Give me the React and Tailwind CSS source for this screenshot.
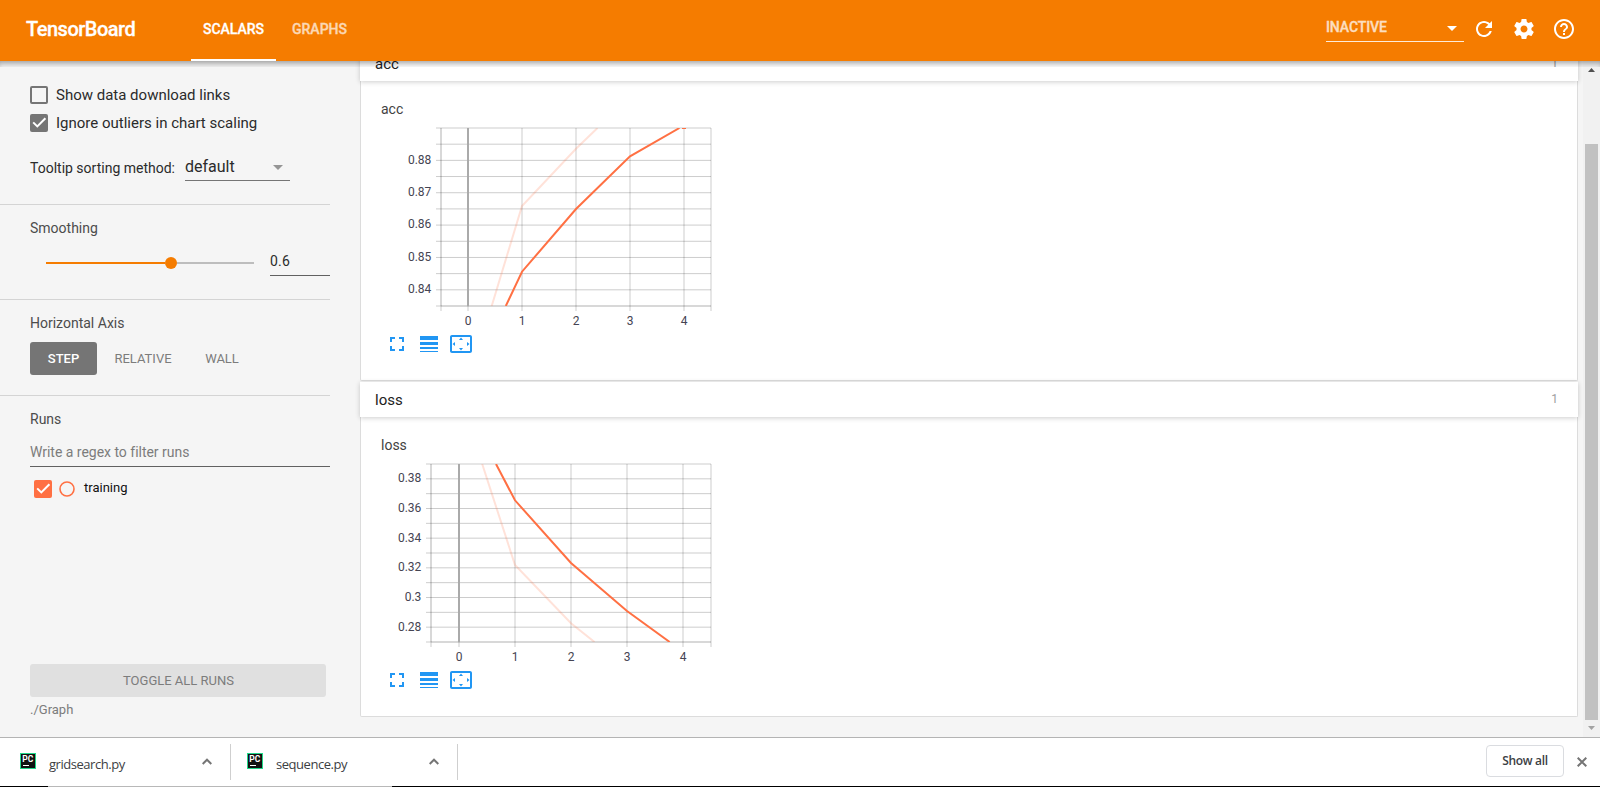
import React from "react";

function MdIcon({ d, className }) {
  return (
    <svg viewBox="0 0 24 24" className={`h-6 w-6 shrink-0 fill-current ${className || ""}`}>
      <path d={d} />
    </svg>
  );
}

const ICONS = {
  refresh:
    "M17.65 6.35C16.2 4.9 14.21 4 12 4c-4.42 0-7.99 3.58-7.99 8s3.57 8 7.99 8c3.73 0 6.84-2.55 7.73-6h-2.08c-.82 2.33-3.04 4-5.65 4-3.31 0-6-2.69-6-6s2.69-6 6-6c1.66 0 3.14.69 4.22 1.78L13 11h7V4l-2.35 2.35z",
  settings:
    "M19.43 12.98c.04-.32.07-.64.07-.98s-.03-.66-.07-.98l2.11-1.65c.19-.15.24-.42.12-.64l-2-3.46c-.12-.22-.39-.3-.61-.22l-2.49 1c-.52-.4-1.08-.73-1.69-.98l-.38-2.65C14.46 2.18 14.25 2 14 2h-4c-.25 0-.46.18-.49.42l-.38 2.65c-.61.25-1.17.59-1.69.98l-2.49-1c-.23-.09-.49 0-.61.22l-2 3.46c-.13.22-.07.49.12.64l2.11 1.65c-.04.32-.07.65-.07.98s.03.66.07.98l-2.11 1.65c-.19.15-.24.42-.12.64l2 3.46c.12.22.39.3.61.22l2.49-1c.52.4 1.08.73 1.69.98l.38 2.65c.03.24.24.42.49.42h4c.25 0 .46-.18.49-.42l.38-2.65c.61-.25 1.17-.59 1.69-.98l2.49 1c.23.09.49 0 .61-.22l2-3.46c.12-.22.07-.49-.12-.64l-2.11-1.65zM12 15.5c-1.93 0-3.5-1.57-3.5-3.5s1.57-3.5 3.5-3.5 3.5 1.57 3.5 3.5-1.57 3.5-3.5 3.5z",
  help:
    "M11 18h2v-2h-2v2zm1-16C6.48 2 2 6.48 2 12s4.48 10 10 10 10-4.48 10-10S17.52 2 12 2zm0 18c-4.41 0-8-3.59-8-8s3.59-8 8-8 8 3.59 8 8-3.59 8-8 8zm0-14c-2.21 0-4 1.79-4 4h2c0-1.1.9-2 2-2s2 .9 2 2c0 2-3 1.75-3 5h2c0-2.25 3-2.5 3-5 0-2.21-1.79-4-4-4z",
  dropDown: "M7 10l5 5 5-5z",
  fullscreen:
    "M7 14H5v5h5v-2H7v-3zm-2-4h2V7h3V5H5v5zm12 7h-3v2h5v-5h-2v3zM14 5v2h3v3h2V5h-5z",
  lineWeight: "M3 17h18v-2H3v2zm0 3h18v-1H3v1zm0-7h18v-3H3v3zm0-9v4h18V4H3z",
  overscan:
    "M12.01 5.5L10 8h4l-1.99-2.5zM18 10v4l2.5-1.99L18 10zM6 10l-2.5 2.01L6 14v-4zm8 6h-4l2.01 2.5L14 16zm7-13H3c-1.1 0-2 .9-2 2v14c0 1.1.9 2 2 2h18c1.1 0 2-.9 2-2V5c0-1.1-.9-2-2-2zm0 16.01H3V4.99h18v14.02z",
};

function Header() {
  return (
    <header className="flex h-[61px] shrink-0 bg-[#f57c00] text-white">
      <div className="w-[191px] pl-[26px] text-[20px] leading-[58px] font-medium tracking-[-0.5px] [-webkit-text-stroke:0.3px_#fff]">
        TensorBoard
      </div>
      <nav className="flex text-[14px] leading-[58px] font-medium [-webkit-text-stroke:0.3px_#fff]">
        <div className="w-[85px] border-b-2 border-white text-center">SCALARS</div>
        <div className="w-[87px] text-center opacity-70">GRAPHS</div>
      </nav>
      <div className="ml-auto flex pr-6">
        <div className="mr-2 flex h-[42px] w-[138px] items-center justify-between border-b border-white/85 pt-[14px]">
          <span className="pb-px text-[14px] font-medium tracking-[-0.1px] opacity-75 [-webkit-text-stroke:0.3px_#fff]">INACTIVE</span>
          <MdIcon d={ICONS.dropDown} />
        </div>
        <div className="flex gap-4 pt-[17px]">
          <MdIcon d={ICONS.refresh} />
          <MdIcon d={ICONS.settings} />
          <MdIcon d={ICONS.help} />
        </div>
      </div>
    </header>
  );
}

function CheckMark() {
  return (
    <svg viewBox="0 0 18 18" className="h-[18px] w-[18px]" fill="none" stroke="#fff" strokeWidth="2">
      <path d="M3.2 8.4 L7.3 12.4 L15.4 4.2" />
    </svg>
  );
}

function Sidebar() {
  return (
    <aside className="flex w-[330px] shrink-0 flex-col text-[14px] text-[#4c4c4c]">
      <section className="h-[144px] border-b border-[#d4d4d4] pt-[25px] pl-[30px] text-[#2b2b2b]">
        <div className="flex h-[18px] items-center gap-2 text-[15px]">
          <span className="h-[18px] w-[18px] rounded-[2px] border-2 border-[#757575]" />
          Show data download links
        </div>
        <div className="mt-[10px] flex h-[18px] items-center gap-2 text-[15px]">
          <span className="h-[18px] w-[18px] rounded-[2px] bg-[#757575]">
            <CheckMark />
          </span>
          Ignore outliers in chart scaling
        </div>
        <div className="mt-6 flex h-[25px]">
          <span className="w-[155px] leading-6">Tooltip sorting method:</span>
          <span className="flex w-[105px] items-center justify-between border-b border-[#757575] pb-[3px] text-[16px] leading-[20px]">
            default
            <MdIcon d={ICONS.dropDown} className="text-[#959595]" />
          </span>
        </div>
      </section>
      <section className="h-[95px] border-b border-[#d4d4d4] pl-[30px]">
        <div className="pt-[13px] leading-5">Smoothing</div>
        <div className="mt-[11px] flex h-[28px] items-center pl-4">
          <div className="flex h-3 w-[208px] items-center">
            <div className="h-[2px] w-[119px] bg-[#f57c00]" />
            <div className="h-3 w-3 rounded-full bg-[#f57c00]" />
            <div className="h-[2px] flex-1 bg-[#bdbdbd]" />
          </div>
          <div className="mb-px ml-4 h-[27px] w-[60px] border-b border-[#616161] text-[14px] leading-[24px] tracking-[0.2px] text-[#2b2b2b]">0.6</div>
        </div>
      </section>
      <section className="h-[96px] border-b border-[#d4d4d4] pl-[30px]">
        <div className="pt-[13px] leading-5">Horizontal Axis</div>
        <div className="mt-[9px] flex h-[33px] text-[13px] leading-[33px] text-[#7c7c7c]">
          <div className="w-[67px] rounded-[3px] bg-[#757575] text-center font-medium text-white">STEP</div>
          <div className="w-[92px] text-center">RELATIVE</div>
          <div className="w-[66px] text-center">WALL</div>
        </div>
      </section>
      <section className="pl-[30px]">
        <div className="pt-[13px] leading-5">Runs</div>
        <div className="mt-3 h-[26px] border-b border-[#616161] text-[14px] leading-[22px] tracking-[-0.02px] text-[#7c7c7c]">
          Write a regex to filter runs
        </div>
        <div className="mt-[13px] flex h-[18px] items-center pl-1">
          <span className="h-[18px] w-[18px] rounded-[2px] bg-[#ff7043]">
            <CheckMark />
          </span>
          <svg viewBox="0 0 16 16" className="ml-[7px] h-4 w-4" fill="none" stroke="#ff7043" strokeWidth="1.6">
            <circle cx="8" cy="8" r="7" />
          </svg>
          <span className="ml-[9px] pb-[2px] text-[13px] text-[#111]">training</span>
        </div>
      </section>
      <section className="mt-auto h-[73px] pl-[30px] text-[13px] text-[#7c7c7c]">
        <div className="h-[33px] w-[296px] rounded-[3px] bg-[#e0e0e0] pl-px text-center leading-[33px]">TOGGLE ALL RUNS</div>
        <div className="pt-[3px] leading-5">./Graph</div>
      </section>
    </aside>
  );
}

/* Plot coordinates are relative to the top-left corner of the 350x206 chart box. */
const ACC = {
  tag: "acc",
  left: 60,
  ticks: [87, 141, 195, 249, 303],
  rows: 11,
  firstLabel: 2,
  labels: ["0.88", "0.87", "0.86", "0.85", "0.84"],
  raw: "110.7,178 141,78 195,20.7 216.5,0",
  smooth: "124.8,178 141,143.7 195,81 249,28.3 298.5,0",
  end: true,
};

const LOSS = {
  tag: "loss",
  left: 50,
  ticks: [78, 134, 190, 246, 302],
  rows: 12,
  firstLabel: 1,
  labels: ["0.38", "0.36", "0.34", "0.32", "0.3", "0.28"],
  raw: "101.2,0 134,101 190,159.3 213.5,178",
  smooth: "115,0 134,36.3 190,99 246,147 288.7,178",
};

function Chart({ c }) {
  const step = 178 / c.rows;
  const rows = Array.from({ length: c.rows + 1 }, (_, i) => i * step);
  const clip = `plot-${c.tag}`;
  return (
    <svg viewBox="0 -2 350 206" className="block h-[206px] w-[350px]">
      <clipPath id={clip}>
        <rect x={c.left} y="0" width={330 - c.left} height="178" />
      </clipPath>
      <g stroke="#000" strokeOpacity="0.2">
        {rows.map((y) => (
          <line key={y} x1={c.left - 5} x2="330" y1={y} y2={y} />
        ))}
        {[c.left, ...c.ticks, 330].map((x) => (
          <line key={x} x1={x} x2={x} y1="0" y2="183" />
        ))}
        <line x1={c.left} x2={c.left} y1="0" y2="178" strokeOpacity="0.12" />
        <line x1={c.left} x2="330" y1="178" y2="178" strokeOpacity="0.12" />
      </g>
      <line x1={c.ticks[0]} x2={c.ticks[0]} y1="0" y2="178" stroke="#aaa" strokeWidth="2" />
      <g clipPath={`url(#${clip})`} fill="none" stroke="#ff7043" strokeWidth="2">
        <polyline points={c.raw} strokeOpacity="0.2" />
        <polyline points={c.smooth} />
        {c.end && <line x1="301" x2="305" y1="0" y2="0" />}
      </g>
      <g className="fill-[#454452] text-[12px]">
        {c.labels.map((t, i) => (
          <text key={t} x={c.left - 9.7} y={Math.round((c.firstLabel + 2 * i) * step + 3.4)} textAnchor="end">
            {t}
          </text>
        ))}
        {c.ticks.map((x, i) => (
          <text key={x} x={x} y="197" textAnchor="middle">
            {i}
          </text>
        ))}
      </g>
    </svg>
  );
}

function Category({ c }) {
  return (
    <section className="mb-px">
      <div className="relative flex h-[35px] items-center justify-between bg-white pt-[2px] pr-5 pl-[15px] text-[15px] text-[#212121] shadow-[0_1px_5px_rgba(0,0,0,0.2)]">
        <span>{c.tag}</span>
        <span className="pb-[3px] text-[12px] text-[#9e9e9e]">1</span>
      </div>
      <div className="h-[300px] rounded-b-[2px] border border-t-0 border-[#dcdcdc] bg-white pl-5">
        <div className="pt-[18px] text-[14px] leading-5 text-[#424242]">{c.tag}</div>
        <div className="mt-[7px]">
          <Chart c={c} />
        </div>
        <div className="flex gap-2 pl-1 text-[#2196f3]">
          <MdIcon d={ICONS.fullscreen} />
          <MdIcon d={ICONS.lineWeight} />
          <MdIcon d={ICONS.overscan} />
        </div>
      </div>
    </section>
  );
}

function Scrollbar() {
  return (
    <div className="flex w-[17px] shrink-0 flex-col items-center bg-[#f1f1f1]">
      <svg viewBox="0 0 17 17" className="mt-px h-[17px] w-[17px] fill-[#505050]">
        <path d="M5 10h7L8.5 6z" />
      </svg>
      <div className="mt-[65px] h-[576px] w-[13px] bg-[#c1c1c1]" />
      <svg viewBox="0 0 17 17" className="h-[17px] w-[17px] fill-[#a3a3a3]">
        <path d="M5 6h7L8.5 10z" />
      </svg>
    </div>
  );
}

function Download({ name, className }) {
  return (
    <div className={`flex h-9 items-center border-r border-[#cfcfcf] pr-[18px] ${className}`}>
      <svg viewBox="0 0 16 16" className="mb-[3px] h-4 w-4">
        <rect width="16" height="16" fill="#21d789" />
        <rect x="1" y="1" width="14" height="14" fill="#111" />
        <text x="2.2" y="8.8" fill="#fff" fontSize="8.5" fontWeight="700" textLength="11" lengthAdjust="spacingAndGlyphs">
          PC
        </text>
        <rect x="3" y="12" width="6" height="1" fill="#fff" />
      </svg>
      <span className="ml-[13px] pt-[5px] font-['Open_Sans',sans-serif] text-[13px] tracking-[-0.46px] text-[#3c4043]">{name}</span>
      <svg viewBox="0 0 10 7" className="mb-px ml-auto h-[7px] w-[10px]" fill="none" stroke="#757575" strokeWidth="2">
        <path d="M0.7 6 L5 1.7 L9.3 6" />
      </svg>
    </div>
  );
}

function DownloadShelf() {
  return (
    <footer className="flex h-[50px] shrink-0 flex-col border-t border-[#b4b4b4] bg-white">
      <div className="flex h-12 items-center">
        <Download name="gridsearch.py" className="w-[231px] pl-5" />
        <Download name="sequence.py" className="w-[227px] pl-4" />
        <div className="mb-[2px] ml-auto flex h-8 w-[78px] items-center justify-center rounded-[4px] border border-[#dadce0] pb-px font-['Open_Sans',sans-serif] text-[12px] font-semibold tracking-[-0.3px] text-[#3c4043]">
          Show all
        </div>
        <svg viewBox="0 0 10 10" className="mr-[13px] mb-px ml-[13px] h-[10px] w-[10px]" fill="none" stroke="#757575" strokeWidth="2">
          <path d="M0.7 0.7 L9.3 9.3 M9.3 0.7 L0.7 9.3" />
        </svg>
      </div>
      <div className="flex h-px bg-black pl-12">
        <div className="w-[344px] bg-[#b8b8b8]" />
      </div>
    </footer>
  );
}

export default function App() {
  return (
    <div className="flex h-[787px] w-[1600px] flex-col overflow-hidden bg-[#f5f5f5] font-[Roboto,sans-serif]">
      <Header />
      <div className="relative flex h-[676px] overflow-hidden">
        <Sidebar />
        <main className="flex min-w-0 flex-1 flex-col overflow-hidden pr-[5px] pl-[30px]">
          <div className="-mt-[15px]">
            <Category c={ACC} />
            <Category c={LOSS} />
          </div>
        </main>
        <Scrollbar />
        <div className="pointer-events-none absolute inset-x-0 top-0 h-[6px] shadow-[inset_0_5px_6px_-3px_rgba(0,0,0,0.4)]" />
      </div>
      <DownloadShelf />
    </div>
  );
}
